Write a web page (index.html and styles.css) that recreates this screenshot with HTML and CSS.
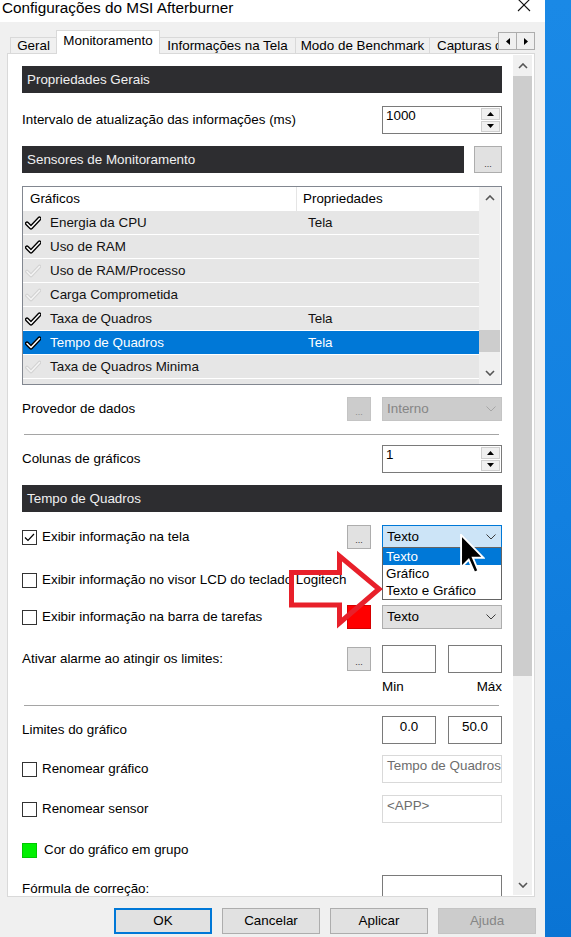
FILE: index.html
```html
<!DOCTYPE html>
<html lang="pt-BR">
<head>
<meta charset="utf-8">
<title>Configurações do MSI Afterburner</title>
<link rel="stylesheet" href="styles.css">
</head>
<body>
<div class="window">
  <header class="titlebar">
    <span class="title">Configurações do MSI Afterburner</span>
    <svg class="close" viewBox="0 0 14 14"><path d="M1 1L13 13M13 1L1 13"/></svg>
  </header>

  <nav class="tabstrip">
    <div class="tab tab-geral">Geral</div>
    <div class="tab tab-mon active">Monitoramento</div>
    <div class="tab tab-info">Informações na Tela</div>
    <div class="tab tab-bench">Modo de Benchmark</div>
    <div class="tab tab-rest">Capturas de Tela</div>
    <div class="tabscroll">
      <span class="tsbtn"><svg viewBox="0 0 4 7"><path d="M4 0L0 3.5L4 7Z"/></svg></span>
      <span class="tsbtn"><svg viewBox="0 0 4 7"><path d="M0 0L4 3.5L0 7Z"/></svg></span>
    </div>
  </nav>

  <main class="panel">
    <div class="content">
      <div class="section">Propriedades Gerais</div>

      <div class="row mt-13">
        <span class="label">Intervalo de atualização das informações (ms)</span>
        <div class="spin">
          <span class="spin-val">1000</span>
          <span class="spin-btns">
            <span><svg viewBox="0 0 7 4"><path d="M0 4L3.5 0L7 4Z"/></svg></span>
            <span><svg viewBox="0 0 7 4"><path d="M0 0L3.5 4L7 0Z"/></svg></span>
          </span>
        </div>
      </div>

      <div class="section-row mt-12">
        <div class="section">Sensores de Monitoramento</div>
        <div class="more big">...</div>
      </div>

      <div class="listbox mt-13">
        <div class="list">
          <div class="list-head">
            <span class="lh-name">Gráficos</span>
            <span class="lh-prop">Propriedades</span>
          </div>
          <div class="list-row">
            <svg class="tick" viewBox="0 0 16 14"><path class="t-out" d="M2 7.5L6 11.5L14.5 2.5"/><path class="t-in" d="M2 7.5L6 11.5L14.5 2.5"/></svg>
            <span class="li-name">Energia da CPU</span><span class="li-prop">Tela</span>
          </div>
          <div class="list-row">
            <svg class="tick" viewBox="0 0 16 14"><path class="t-out" d="M2 7.5L6 11.5L14.5 2.5"/><path class="t-in" d="M2 7.5L6 11.5L14.5 2.5"/></svg>
            <span class="li-name">Uso de RAM</span><span class="li-prop"></span>
          </div>
          <div class="list-row">
            <svg class="tick off" viewBox="0 0 16 14"><path class="t-out" d="M2 7.5L6 11.5L14.5 2.5"/><path class="t-in" d="M2 7.5L6 11.5L14.5 2.5"/></svg>
            <span class="li-name">Uso de RAM/Processo</span><span class="li-prop"></span>
          </div>
          <div class="list-row">
            <svg class="tick off" viewBox="0 0 16 14"><path class="t-out" d="M2 7.5L6 11.5L14.5 2.5"/><path class="t-in" d="M2 7.5L6 11.5L14.5 2.5"/></svg>
            <span class="li-name">Carga Comprometida</span><span class="li-prop"></span>
          </div>
          <div class="list-row">
            <svg class="tick" viewBox="0 0 16 14"><path class="t-out" d="M2 7.5L6 11.5L14.5 2.5"/><path class="t-in" d="M2 7.5L6 11.5L14.5 2.5"/></svg>
            <span class="li-name">Taxa de Quadros</span><span class="li-prop">Tela</span>
          </div>
          <div class="list-row selected">
            <svg class="tick" viewBox="0 0 16 14"><path class="t-out" d="M2 7.5L6 11.5L14.5 2.5"/><path class="t-in" d="M2 7.5L6 11.5L14.5 2.5"/></svg>
            <span class="li-name">Tempo de Quadros</span><span class="li-prop">Tela</span>
          </div>
          <div class="list-row">
            <svg class="tick off" viewBox="0 0 16 14"><path class="t-out" d="M2 7.5L6 11.5L14.5 2.5"/><path class="t-in" d="M2 7.5L6 11.5L14.5 2.5"/></svg>
            <span class="li-name">Taxa de Quadros Minima</span><span class="li-prop"></span>
          </div>
          <div class="list-row"></div>
        </div>
        <div class="lscroll">
          <span class="sb-btn ls-btn"><svg viewBox="0 0 10 6"><path d="M1 5L5 1L9 5"/></svg></span>
          <span class="ls-gap"></span>
          <span class="ls-thumb"></span>
          <span class="ls-rest"></span>
          <span class="sb-btn ls-btn"><svg viewBox="0 0 10 6"><path d="M1 1L5 5L9 1"/></svg></span>
        </div>
      </div>

      <div class="row mt-12">
        <span class="label">Provedor de dados</span>
        <div class="more off">...</div>
        <div class="select off"><span>Interno</span><svg viewBox="0 0 10 6"><path d="M0.5 0.5L5 5L9.5 0.5"/></svg></div>
      </div>

      <div class="rule mt-13"></div>

      <div class="row mt-10">
        <span class="label">Colunas de gráficos</span>
        <div class="spin">
          <span class="spin-val">1</span>
          <span class="spin-btns">
            <span><svg viewBox="0 0 7 4"><path d="M0 4L3.5 0L7 4Z"/></svg></span>
            <span><svg viewBox="0 0 7 4"><path d="M0 0L3.5 4L7 0Z"/></svg></span>
          </span>
        </div>
      </div>

      <div class="section mt-12">Tempo de Quadros</div>

      <div class="row mt-13">
        <span class="cbox"><svg viewBox="0 0 11 9"><path d="M1 4.5L4 7.5L10 1"/></svg></span>
        <span class="label">Exibir informação na tela</span>
        <div class="more">...</div>
        <div class="select focus"><span>Texto</span><svg viewBox="0 0 10 6"><path d="M0.5 0.5L5 5L9.5 0.5"/></svg></div>
      </div>

      <div class="row mt-19">
        <span class="cbox"></span>
        <span class="label">Exibir informação no visor LCD do teclado Logitech</span>
      </div>

      <div class="row mt-13">
        <span class="cbox"></span>
        <span class="label">Exibir informação na barra de tarefas</span>
        <div class="swatch"></div>
        <div class="select"><span>Texto</span><svg viewBox="0 0 10 6"><path d="M0.5 0.5L5 5L9.5 0.5"/></svg></div>
      </div>

      <div class="row mt-16">
        <span class="label">Ativar alarme ao atingir os limites:</span>
        <div class="more">...</div>
        <div class="pair">
          <span class="field half"></span>
          <span class="field half"></span>
        </div>
      </div>

      <div class="row scale mt-7">
        <div class="pair"><span>Min</span><span>Máx</span></div>
      </div>

      <div class="rule mt-11"></div>

      <div class="row mt-10">
        <span class="label">Limites do gráfico</span>
        <div class="pair">
          <span class="field half">0.0</span>
          <span class="field half">50.0</span>
        </div>
      </div>

      <div class="row mt-11">
        <span class="cbox"></span>
        <span class="label">Renomear gráfico</span>
        <span class="field wide muted">Tempo de Quadros</span>
      </div>

      <div class="row mt-12">
        <span class="cbox"></span>
        <span class="label">Renomear sensor</span>
        <span class="field wide muted">&lt;APP&gt;</span>
      </div>

      <div class="row mt-15">
        <span class="swatch small"></span>
        <span class="label">Cor do gráfico em grupo</span>
      </div>

      <div class="row mt-13">
        <span class="label">Fórmula de correção:</span>
        <span class="field wide"></span>
      </div>
    </div>

    <div class="vscroll">
      <span class="sb-btn vs-btn"><svg viewBox="0 0 10 6"><path d="M1 5L5 1L9 5"/></svg></span>
      <span class="vs-thumb"></span>
      <span class="vs-track"></span>
      <span class="sb-btn vs-btn"><svg viewBox="0 0 10 6"><path d="M1 1L5 5L9 1"/></svg></span>
    </div>
  </main>

  <footer class="buttons">
    <div class="btn default">OK</div>
    <div class="btn">Cancelar</div>
    <div class="btn">Aplicar</div>
    <div class="btn off">Ajuda</div>
  </footer>

  <!-- open list of the "Exibir informação na tela" combo -->
  <div class="dropdown">
    <div class="option selected">Texto</div>
    <div class="option">Gráfico</div>
    <div class="option">Texto e Gráfico</div>
  </div>

  <svg class="callout" viewBox="0 0 100 80">
    <polygon points="5.5,22.5 53.5,22.5 53.5,6 93,39 53.5,73 53.5,55 5.5,55"/>
  </svg>

  <svg class="pointer" viewBox="0 0 13 21">
    <path d="M0.5 0.5L0.5 17.5L4.5 13.5L7.5 20.3L9.6 19.4L6.7 12.5L12.3 12.5Z"/>
  </svg>
</div>
<div class="desktop"></div>
</body>
</html>
```

FILE: styles.css
```css
* { box-sizing: border-box; }

html, body { margin: 0; padding: 0; }

body {
  width: 571px;
  height: 937px;
  overflow: hidden;
  display: flex;
  font-family: "Liberation Sans", Arial, sans-serif;
  font-size: 13.4px;
  line-height: 16px;
  color: #000;
}

/* ---------- window frame ---------- */
.window {
  position: relative;
  flex: none;
  width: 545px;
  height: 937px;
  background: #f0f0f0;
  overflow: hidden;
}

.desktop {
  flex: 1;
  background: linear-gradient(180deg, #1a89e6 0%, #1280e0 55%, #0a74d4 100%);
}

.titlebar {
  height: 22px;
  background: #fff;
  display: flex;
  justify-content: space-between;
  align-items: flex-start;
}

.title {
  font-size: 15.3px;
  line-height: 16px;
  padding-left: 2px;
}

.close {
  width: 14px;
  height: 14px;
  margin: -2px 14px 0 0;
  fill: none;
  stroke: #111;
  stroke-width: 1.1;
}

/* ---------- tabs ---------- */
.tabstrip {
  height: 31px;
  display: flex;
  align-items: flex-end;
  padding: 0 10px;
}

.tab {
  flex: none;
  height: 16px;
  line-height: 15px;
  border: 1px solid #d9d9d9;
  border-bottom: none;
  background: #f0f0f0;
  text-align: center;
  white-space: nowrap;
}

.tab + .tab { margin-left: -1px; }

.tab-geral { width: 47px; }
.tab-mon { width: 104px; }
.tab-info { width: 137px; }
.tab-bench { width: 135px; }

.tab-rest {
  flex: 1;
  min-width: 0;
  overflow: hidden;
  text-align: left;
  padding-left: 7px;
  border-right: none;
}

.tab.active {
  height: 24px;
  margin-bottom: -1px;
  padding-top: 2px;
  background: #fff;
  position: relative;
  z-index: 1;
}

.tabscroll {
  align-self: flex-start;
  margin-top: 10px;
  display: flex;
  flex: none;
}

.tsbtn {
  width: 19px;
  height: 18px;
  border: 1px solid #adadad;
  background: #f0f0f0;
  display: flex;
  align-items: center;
  justify-content: center;
}

.tsbtn + .tsbtn { margin-left: -1px; }

.tsbtn svg { width: 4px; height: 7px; fill: #000; }

/* ---------- tab page ---------- */
.panel {
  margin-left: 7px;
  width: 528px;
  height: 844px;
  border: 1px solid #d9d9d9;
  background: #fff;
  display: flex;
}

.content {
  flex: none;
  width: 494px;
  height: 842px;
  padding: 12px 0 0 14px;
  overflow: hidden;
  display: flex;
  flex-direction: column;
}

/* scrollbars */
.sb-btn {
  flex: none;
  display: flex;
  align-items: center;
  justify-content: center;
}

.sb-btn svg {
  width: 10px;
  height: 6px;
  fill: none;
  stroke: #555;
  stroke-width: 1.6;
}

.vscroll {
  width: 19px;
  margin: 1px 2px 1px 11px;
  background: #f0f0f0;
  display: flex;
  flex-direction: column;
}

.vs-btn { height: 21px; }
.vs-thumb { flex: none; height: 600px; background: #cdcdcd; }
.vs-track { flex: 1; }

/* section headers */
.section {
  flex: none;
  height: 27px;
  background: #2d2d30;
  color: #f0f0f0;
  display: flex;
  align-items: center;
  padding-left: 5px;
}

.section-row {
  flex: none;
  display: flex;
  gap: 10px;
}

.section-row .section { flex: 1; }

/* form rows */
.row {
  flex: none;
  min-height: 24px;
  display: flex;
  align-items: center;
}

.label {
  flex: 1;
  white-space: nowrap;
}

.rule {
  flex: none;
  height: 1px;
  margin-left: 2px;
  margin-right: 3px;
  background: #a5a5a5;
}

.more {
  flex: none;
  width: 24px;
  height: 24px;
  margin-right: 11px;
  border: 1px solid #adadad;
  background: #e1e1e1;
  color: #333;
  font-size: 9px;
  line-height: 15px;
  display: flex;
  align-items: flex-end;
  justify-content: center;
}

.more.off { background: #cccccc; border-color: #c4c4c4; color: #8c8c8c; }

.more.big {
  width: 28px;
  height: 27px;
  margin-right: 0;
  line-height: 16px;
}

.spin {
  flex: none;
  width: 120px;
  height: 28px;
  border: 1px solid #7a7a7a;
  background: #fff;
  display: flex;
}

.spin-val {
  flex: 1;
  padding: 1px 0 0 3px;
}

.spin-btns {
  width: 19px;
  margin: 1px 1px 1px 0;
  display: flex;
  flex-direction: column;
  gap: 1px;
}

.spin-btns span {
  flex: 1;
  background: #f0f0f0;
  border: 1px solid #cfcfcf;
  display: flex;
  align-items: center;
  justify-content: center;
}

.spin-btns svg { width: 7px; height: 4px; fill: #000; }

.select {
  flex: none;
  width: 120px;
  height: 24px;
  padding: 0 5px 0 4px;
  border: 1px solid #adadad;
  background: #e1e1e1;
  display: flex;
  align-items: center;
  justify-content: space-between;
}

.select svg {
  width: 10px;
  height: 6px;
  fill: none;
  stroke: #3c3c3c;
  stroke-width: 1;
}

.select.focus { background: #cce4f7; border-color: #0078d7; }
.select.off { background: #cccccc; border-color: #c4c4c4; color: #868686; }
.select.off svg { stroke: #a6a6a6; }

.cbox {
  flex: none;
  width: 15px;
  height: 15px;
  margin-right: 5px;
  border: 1px solid #333;
  background: #fff;
  display: flex;
  align-items: center;
  justify-content: center;
}

.cbox svg {
  width: 11px;
  height: 9px;
  fill: none;
  stroke: #000;
  stroke-width: 1.2;
}

.swatch {
  flex: none;
  width: 24px;
  height: 24px;
  margin-right: 11px;
  background: #ff0000;
  border: 1px solid #d40000;
}

.swatch.small {
  width: 15px;
  height: 15px;
  margin-right: 7px;
  background: #00f000;
  border-color: #00c800;
}

.pair {
  flex: none;
  width: 120px;
  display: flex;
  justify-content: space-between;
}

.field {
  flex: none;
  height: 28px;
  padding: 2px 4px 0;
  border: 1px solid #7a7a7a;
  background: #fff;
}

.field.half { width: 54px; text-align: center; }
.field.wide { width: 120px; }

.field.muted {
  border-color: #d9d9d9;
  color: #6d6d6d;
  white-space: nowrap;
  overflow: hidden;
}

.row.scale {
  min-height: 14px;
  height: 14px;
  line-height: 14px;
  justify-content: flex-end;
}

/* sensor list */
.listbox {
  flex: none;
  height: 199px;
  border: 1px solid #828790;
  background: #fff;
  display: flex;
}

.list {
  flex: 1;
  overflow: hidden;
}

.list-head {
  height: 24px;
  display: flex;
}

.lh-name {
  width: 274px;
  padding-left: 7px;
  border-right: 1px solid #e5e5e5;
  display: flex;
  align-items: center;
}

.lh-prop {
  padding-left: 6px;
  display: flex;
  align-items: center;
}

.list-row {
  height: 24px;
  background: #e6e6e6;
  border-bottom: 1px solid #fff;
  display: flex;
  align-items: center;
  color: #111;
}

.list-row.selected { background: #0078d7; color: #fff; }

.tick {
  flex: none;
  width: 16px;
  height: 14px;
  margin-left: 2px;
}

.tick path { fill: none; stroke-linecap: round; stroke-linejoin: round; }
.tick .t-out { stroke: #000; stroke-width: 4.2; }
.tick .t-in { stroke: #fff; stroke-width: 1.5; }
.tick.off .t-out { stroke: #d2d2d2; stroke-width: 3.6; }
.tick.off .t-in { stroke: #f4f4f4; }

.li-name {
  width: 247px;
  margin-left: 9px;
  white-space: nowrap;
}

.li-prop { padding-left: 11px; }

.lscroll {
  width: 21px;
  margin-right: 1px;
  background: #f0f0f0;
  display: flex;
  flex-direction: column;
}

.ls-btn { height: 22px; }
.ls-gap { flex: none; height: 121px; }
.ls-thumb { flex: none; height: 22px; background: #cdcdcd; }
.ls-rest { flex: 1; }

/* vertical spacing between the form rows */
.mt-7 { margin-top: 7px; }
.mt-10 { margin-top: 10px; }
.mt-11 { margin-top: 11px; }
.mt-12 { margin-top: 12px; }
.mt-13 { margin-top: 13px; }
.mt-15 { margin-top: 15px; }
.mt-16 { margin-top: 16px; }
.mt-19 { margin-top: 19px; }

/* dialog buttons */
.buttons {
  margin-top: 11px;
  display: flex;
  justify-content: flex-end;
  gap: 10px;
  padding-right: 9px;
}

.btn {
  width: 98px;
  height: 26px;
  border: 1px solid #adadad;
  background: #e1e1e1;
  display: flex;
  align-items: center;
  justify-content: center;
}

.btn.default { border: 2px solid #0078d7; }
.btn.off { background: #cccccc; border-color: #c4c4c4; color: #868686; }

/* floating layers */
.dropdown {
  position: absolute;
  left: 382px;
  top: 547px;
  width: 120px;
  border: 1px solid #646464;
  background: #fff;
  z-index: 2;
}

.option {
  height: 17px;
  line-height: 17px;
  padding-left: 3px;
  white-space: nowrap;
}

.option.selected { background: #0078d7; color: #fff; }

.callout {
  position: absolute;
  left: 286px;
  top: 550px;
  width: 100px;
  height: 80px;
  overflow: visible;
  z-index: 3;
}

.callout polygon {
  fill: none;
  stroke: #e8202a;
  stroke-width: 5;
  stroke-linejoin: miter;
}

.pointer {
  position: absolute;
  left: 460px;
  top: 534px;
  width: 25px;
  height: 40px;
  z-index: 4;
}

.pointer path {
  fill: #000;
  stroke: #fff;
  stroke-width: 1;
  stroke-linejoin: miter;
}
```
